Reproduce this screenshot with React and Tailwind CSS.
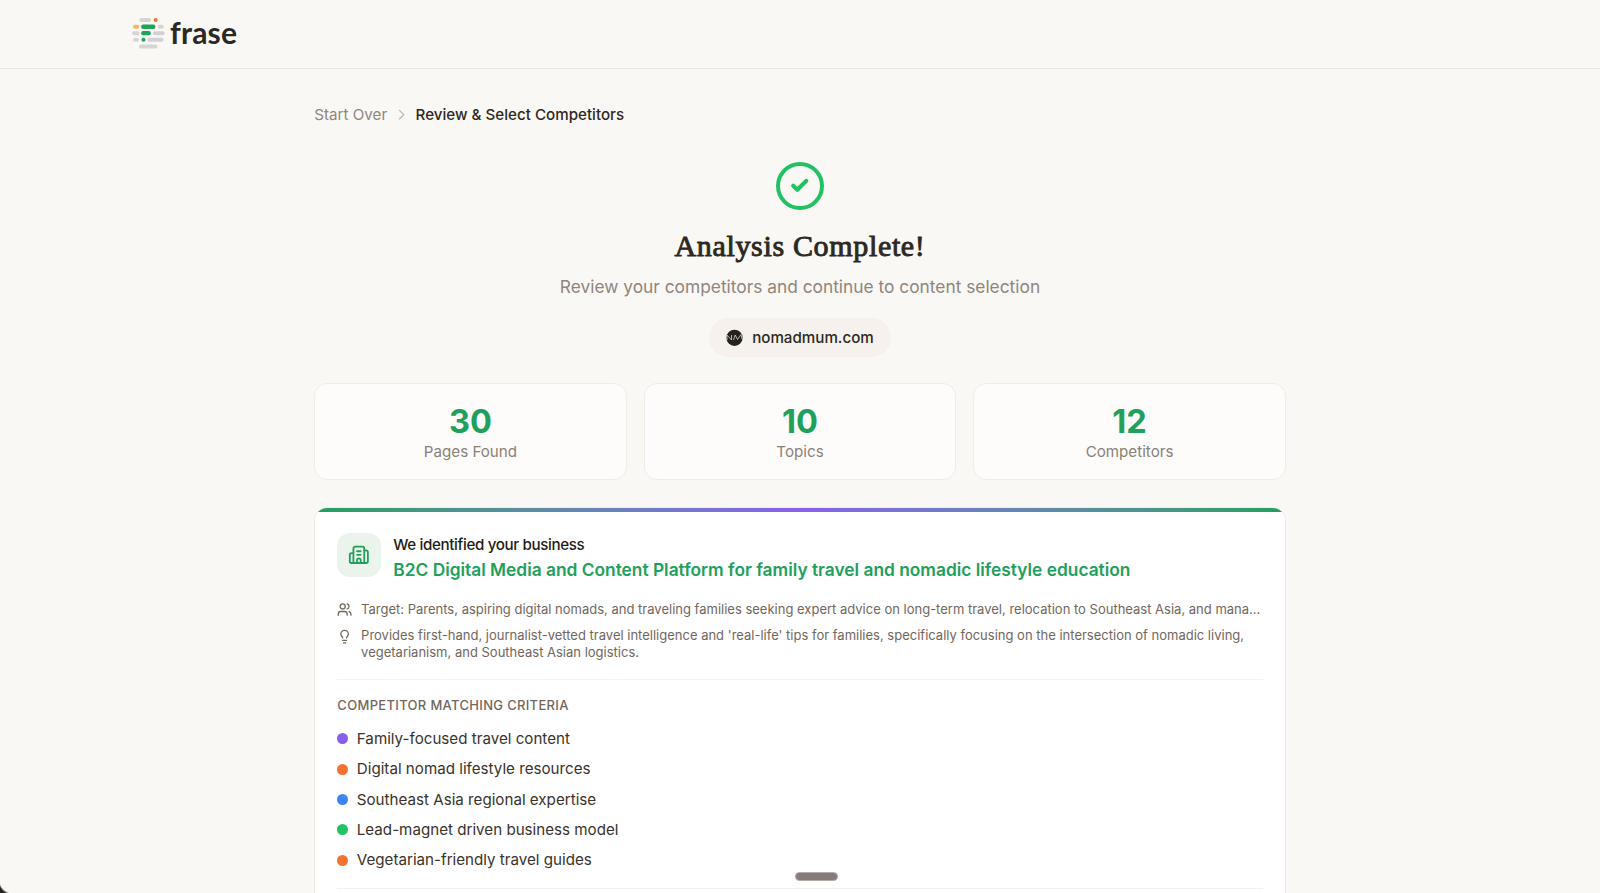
import { Building2, Check, ChevronRight, Lightbulb, Users } from "lucide-react";

const stats = [
  { value: "30", label: "Pages Found" },
  { value: "10", label: "Topics" },
  { value: "12", label: "Competitors" },
];

const criteria = [
  { label: "Family-focused travel content", dot: "bg-[#8760ee]" },
  { label: "Digital nomad lifestyle resources", dot: "bg-[#f4722f]" },
  { label: "Southeast Asia regional expertise", dot: "bg-[#3f84f5]" },
  { label: "Lead-magnet driven business model", dot: "bg-[#22c163]" },
  { label: "Vegetarian-friendly travel guides", dot: "bg-[#f4722f]" },
];

function Logo() {
  return (
    <div className="flex items-center gap-[5px]">
      <svg width="33" height="31" viewBox="0 0 33 31" fill="none" strokeWidth="4" strokeLinecap="round">
        <path d="M9.2 2H17.2" stroke="#d6d5d3" />
        <path d="M23.6 2H23.7" stroke="#f0732f" />
        <path d="M3 8.7H5.2" stroke="#fbb565" />
        <path d="M11.3 8.7H21.3" stroke="#20a35b" strokeWidth="4.4" />
        <path d="M27.6 8.7H29.8" stroke="#d6d5d3" />
        <path d="M2 15.2H5.6" stroke="#d6d5d3" />
        <path d="M11.2 15.2H16.8" stroke="#20a35b" strokeWidth="4.2" />
        <path d="M22.8 15.2H30.6" stroke="#d2d1d3" />
        <path d="M3.2 21.8H5" stroke="#d6d5d3" />
        <path d="M11.4 21.8H11.5" stroke="#20a35b" />
        <path d="M17.6 21.8H29.6" stroke="#d2d1d3" />
        <path d="M9 28.5H23.4" stroke="#d6d5d3" />
      </svg>
      <span className="pb-[2px] font-['Lato',sans-serif] text-[30px] leading-[34px] font-bold tracking-[0.2px] text-[#2d2822]">frase</span>
    </div>
  );
}

function SiteBadge() {
  return (
    <div className="flex h-[39px] items-center gap-[9px] rounded-full bg-[#f6f1ed] px-[17.5px]">
      <svg width="17" height="17" viewBox="0 0 17 17">
        <circle cx="8.5" cy="8.8" r="8.1" fill="#25221e" />
        <path d="M1 11V6L5.5 11V6M7.5 11L9.2 6L11.5 10.5L15 5.5L16 10" fill="none" stroke="#d8d5d0" strokeWidth=".8" />
      </svg>
      <span className="pt-px text-[15.17px] font-medium text-[#2d2822]">nomadmum.com</span>
    </div>
  );
}

function StatCard({ value, label }) {
  return (
    <div className="flex h-[97px] flex-col items-center rounded-[13px] border border-[#f2ebe6] bg-[#fdfcfb] pt-[20px]">
      <div className="text-[32.5px] leading-[36px] font-bold text-[#21a05c]">{value}</div>
      <div className="mt-px text-[15.17px] leading-[22px] text-[#8a8178]">{label}</div>
    </div>
  );
}

function BusinessCard() {
  return (
    <section className="mt-[27px] h-[480px] overflow-hidden rounded-[13px] border border-[#f2ebe6] bg-white">
      <div className="h-1 bg-linear-to-r from-[#21a05c] via-[#8760ee] to-[#21a05c]" />
      <div className="px-[22px] pt-[21px]">
        <div className="flex gap-[12.6px]">
          <div className="flex h-[44px] w-[43.4px] items-center justify-center rounded-[13px] bg-[#eaf4ed] text-[#21a05c]">
            <Building2 size={21.7} />
          </div>
          <div className="pt-px">
            <h2 className="text-[15.17px] leading-[22px] font-medium tracking-[-0.024em] text-[#1f1b16]">We identified your business</h2>
            <p className="mt-px text-[17.34px] leading-[26px] font-semibold text-[#21a05c]">
              B2C Digital Media and Content Platform for family travel and nomadic lifestyle education
            </p>
          </div>
        </div>

        <div className="mt-[18px] flex flex-col gap-[9px] text-[13px] leading-[17px] text-[#71675d]">
          <div className="flex items-start gap-[8.6px]">
            <Users size={15.2} className="mt-px shrink-0" />
            <p>
              Target: Parents, aspiring digital nomads, and traveling families seeking expert advice on long-term travel, relocation to Southeast Asia, and mana...
            </p>
          </div>
          <div className="flex items-start gap-[8.6px]">
            <Lightbulb size={15.2} className="mt-[2px] shrink-0" />
            <p>
              Provides first-hand, journalist-vetted travel intelligence and 'real-life' tips for families, specifically focusing on the intersection of nomadic living,
              vegetarianism, and Southeast Asian logistics.
            </p>
          </div>
        </div>

        <div className="mt-[18px] border-t border-[#f7f4f0] pt-[17px]">
          <h3 className="text-[13px] leading-[17px] font-medium tracking-[0.025em] text-[#71675d] uppercase">Competitor Matching Criteria</h3>
          <ul className="mt-[14px] flex flex-col gap-[8.65px] text-[15.17px] leading-[21.7px] text-[#39332c]">
            {criteria.map((item) => (
              <li key={item.label} className="flex items-center gap-[8.5px]">
                <span className={`size-[11px] rounded-full ${item.dot}`} />
                {item.label}
              </li>
            ))}
          </ul>
        </div>
        <div className="mt-[17px] border-t border-[#f5efeb]" />
      </div>
    </section>
  );
}

export default function App() {
  return (
    <div className="relative h-[893px] overflow-hidden bg-[#faf8f5] font-['Inter',sans-serif]">
      <header className="flex h-[69px] items-center border-b border-[#e9e6e3] px-[132px] pb-[2px]">
        <Logo />
      </header>

      <main className="mx-auto w-[971.4px] pt-[35px]">
        <nav className="flex h-[22px] items-center text-[15.17px]">
          <span className="text-[#8f867d]">Start Over</span>
          <ChevronRight size={17.3} strokeWidth={1.6} className="mx-[5.6px] text-[#b9b2aa]" />
          <span className="font-medium text-[#2d2822]">Review & Select Competitors</span>
        </nav>

        <div className="mt-9 flex flex-col items-center">
          <div className="flex size-12 items-center justify-center rounded-full border-4 border-[#22c163] text-[#22c163]">
            <Check size={19.5} strokeWidth={5.2} />
          </div>
          <h1 className="mt-[18px] font-['Liberation_Serif',serif] text-[30px] leading-[36px] font-normal tracking-[0.66px] text-[#2d2822] [-webkit-text-stroke:0.9px_#2d2822]">Analysis Complete!</h1>
          <p className="mt-[9px] mb-[18px] text-[17.34px] leading-[27px] text-[#8f867d]">
            Review your competitors and continue to content selection
          </p>
          <SiteBadge />
        </div>

        <div className="mt-[26px] grid grid-cols-3 gap-[17.3px]">
          {stats.map((stat) => (
            <StatCard key={stat.label} {...stat} />
          ))}
        </div>

        <BusinessCard />
      </main>

      {/* drag handle and window corner float over the page */}
      <div className="absolute top-[871.5px] left-[795px] h-[9px] w-[43px] rounded-full border border-[#b5aaa3] bg-[#857b7d]" />
      <svg className="absolute bottom-0 left-0" width="9" height="9" viewBox="0 0 9 9">
        <path d="M0 0Q2 6 9 9H0Z" fill="#a9a6a2" />
        <path d="M0 2Q2 7 7 9H0Z" fill="#25221e" />
      </svg>
    </div>
  );
}
